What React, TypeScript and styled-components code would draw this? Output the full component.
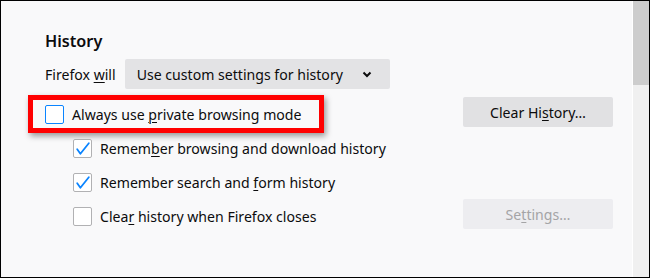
import styled, {createGlobalStyle} from 'styled-components'

const GlobalStyle = createGlobalStyle`
  html, body {
    margin: 0;
    padding: 0;
    background: #f9f9fa;
  }
  body {
    font-family: 'Noto Sans', 'Open Sans', sans-serif;
  }
`

const Frame = styled.div`
  width: 650px;
  height: 278px;
  box-sizing: border-box;
  border: 1px solid #000;
  display: flex;
  background: #f9f9fa;
  overflow: hidden;
`

const Pane = styled.main`
  flex: 1;
  padding: 28px 19px 0 44px;
  color: #0c0c0d;
  font-size: 14.1px;
`

const Scrollbar = styled.div`
  width: 16px;
  border-left: 1px solid #ffffff;
  background: #f0f0f0;
`

const Thumb = styled.div`
  height: 84px;
  background: #cdcdcd;
`

const Heading = styled.h2`
  margin: 0;
  font-size: 16.2px;
  font-weight: 600;
  line-height: 24px;
`

const SelectRow = styled.div`
  display: flex;
  align-items: center;
  gap: 9px;
  margin-top: 6px;
`

const Select = styled.div`
  width: 265px;
  height: 30px;
  box-sizing: border-box;
  padding: 0 18px 0 12px;
  display: flex;
  align-items: center;
  justify-content: space-between;
  background: #e3e3e5;
  border-radius: 2px;
`

const Options = styled.div`
  display: grid;
  grid-template-columns: 1fr 150px;
  grid-auto-rows: 34px;
  margin-top: 8px;
`

const Option = styled.label<{$indent?: boolean}>`
  grid-column: 1;
  align-self: center;
  display: flex;
  align-items: center;
  gap: 8px;
  margin-left: ${p => (p.$indent ? '28px' : '0')};
  white-space: nowrap;
`

const Highlight = styled.div`
  grid-column: 1;
  align-self: center;
  justify-self: start;
  height: 38px;
  box-sizing: border-box;
  margin-left: -17px;
  padding: 0 17px 0 12px;
  display: flex;
  align-items: center;
  border: 5px solid #ff0000;
  box-shadow: 2px 3px 6px rgba(0, 0, 0, 0.4);
`

const Box = styled.span<{$focused?: boolean}>`
  width: 19px;
  height: 19px;
  box-sizing: border-box;
  border: 1px solid ${p => (p.$focused ? '#0a84ff' : '#b1b1b3')};
  border-radius: 2px;
  background: #fff;
  display: flex;
  align-items: center;
  justify-content: center;
  flex-shrink: 0;
`

const Button = styled.div<{$disabled?: boolean}>`
  grid-column: 2;
  align-self: start;
  height: 30px;
  display: flex;
  align-items: center;
  justify-content: center;
  border-radius: 2px;
  background: ${p => (p.$disabled ? '#ededf0' : '#e1e1e3')};
  color: ${p => (p.$disabled ? '#a4a4a6' : '#0c0c0d')};
`

const Key = styled.span`
  text-decoration: underline;
  text-decoration-thickness: 1px;
  text-underline-offset: 2px;
`

const Spacer = styled.div`
  grid-column: 2;
`

function Check({checked, focused}: {checked?: boolean; focused?: boolean}) {
  return (
    <Box $focused={focused}>
      {checked && (
        <svg width="19" height="19" viewBox="0 0 19 19" style={{margin: -1}}>
          <path d="M4.2 10.3 L7.4 14.8 L15.8 4.3" fill="none" stroke="#0a84ff" strokeWidth="1.8" strokeLinecap="round" strokeLinejoin="round" />
        </svg>
      )}
    </Box>
  )
}

export default function App() {
  return (
    <>
      <GlobalStyle />
      <Frame>
        <Pane>
          <Heading>History</Heading>
          <SelectRow>
            <span>
              Firefox <Key>w</Key>ill
            </span>
            <Select>
              <span>Use custom settings for history</span>
              <svg width="10" height="7" viewBox="0 0 10 7">
                <path d="M1.5 1.5 L5 5 L8.5 1.5" fill="none" stroke="#0c0c0d" strokeWidth="2" />
              </svg>
            </Select>
          </SelectRow>
          <Options>
            <Highlight>
              <Option as="div">
                <Check focused />
                <span>
                  Always use <Key>p</Key>rivate browsing mode
                </span>
              </Option>
            </Highlight>
            <Button>
              Clear Hi<Key>s</Key>tory…
            </Button>
            <Option $indent>
              <Check checked />
              <span>
                Remem<Key>b</Key>er browsing and download history
              </span>
            </Option>
            <Spacer />
            <Option $indent>
              <Check checked />
              <span>
                Remember search and <Key>f</Key>orm history
              </span>
            </Option>
            <Spacer />
            <Option $indent>
              <Check />
              <span>
                Clea<Key>r</Key> history when Firefox closes
              </span>
            </Option>
            <Button $disabled>
              Se<Key>t</Key>tings…
            </Button>
          </Options>
        </Pane>
        <Scrollbar>
          <Thumb />
        </Scrollbar>
      </Frame>
    </>
  )
}
